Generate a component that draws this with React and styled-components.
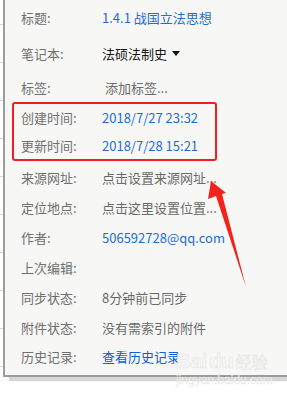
import React from 'react'
import styled, { createGlobalStyle } from 'styled-components'

const Global = createGlobalStyle`
  html, body { margin: 0; padding: 0; background: #ffffff; }
  body { font-family: "Noto Sans CJK SC", "Microsoft YaHei", sans-serif; }
`

const Page = styled.div`
  position: relative;
  width: 287px;
  height: 396px;
  overflow: hidden;
  display: flex;
  align-items: flex-start;
  background: #ffffff;
`

const Strip = styled.div`
  width: 3px;
  height: 378px;
  flex: none;
  background: repeating-linear-gradient(
    to bottom,
    #ffffff 0px,
    #ffffff 24px,
    #d4d4d4 24px,
    #d4d4d4 25px,
    #ffffff 25px,
    #ffffff 38px
  );
`

const Panel = styled.div`
  flex: 1;
  height: 375px;
  background: #f7f7f5;
  border-left: 2px solid #9c9c9c;
  border-bottom: 2px solid #9c9c9c;
  box-shadow: 6px 4px 1px rgba(0, 0, 0, 0.16);
  display: flex;
  flex-direction: column;
  font-size: 13px;
`

const Row = styled.div`
  height: ${p => p.$h}px;
  display: flex;
  align-items: center;
  padding-left: ${p => (p.$inset ? 7 : 16)}px;
  flex: none;
`

const Label = styled.span`
  width: 81px;
  flex: none;
  color: #707070;
  white-space: nowrap;
`

const Value = styled.span`
  white-space: nowrap;
  color: ${p =>
    p.$tone === 'blue' ? '#1f6cd3' :
    p.$tone === 'link' ? '#0c5fd6' :
    p.$tone === 'dark' ? '#151515' : '#6a6a6a'};
  padding-left: ${p => p.$pad || 0}px;
  display: inline-flex;
  align-items: center;
`

const Highlight = styled.div`
  margin-left: 7px;
  width: 201px;
  height: 55px;
  border: 2px solid #f01e1e;
  border-radius: 3px;
  display: flex;
  flex-direction: column;
`

const Caret = styled.svg`
  margin-left: 5px;
  width: 8px;
  height: 5px;
`

const Arrow = styled.svg`
  position: absolute;
  left: 0;
  top: 0;
  pointer-events: none;
`

const Watermark = styled.div`
  position: absolute;
  left: 176px;
  top: 351px;
  color: #f7f7f5;
  -webkit-text-stroke: 0.5px #e2e2e2;
  font-family: "Liberation Sans", Arial, sans-serif;
  line-height: 1;
  opacity: 0.85;
  pointer-events: none;
`

const Brand = styled.div`
  font-size: 20px;
  font-weight: bold;
  display: flex;
  align-items: center;
  gap: 2px;

  span:last-child {
    font-family: "Noto Sans CJK SC", sans-serif;
    font-size: 16px;
    font-weight: normal;
  }
`

const Domain = styled.div`
  font-size: 12px;
  margin-top: 3px;
  -webkit-text-stroke: 0.3px #dedede;
`

const rows = [
  { label: '来源网址:', value: '点击设置来源网址...', h: 32 },
  { label: '定位地点:', value: '点击这里设置位置...', h: 29.8 },
  { label: '作者:', value: '506592728@qq.com', tone: 'blue', h: 29.8 },
  { label: '上次编辑:', value: '', h: 29.8 },
  { label: '同步状态:', value: '8分钟前已同步', h: 29.8 },
  { label: '附件状态:', value: '没有需索引的附件', h: 29.8 },
  { label: '历史记录:', value: '查看历史记录', tone: 'link', h: 29.8 },
]

export default function App() {
  return (
    <Page>
      <Global />
      <Strip />
      <Panel>
        <Row $h={34}>
          <Label>标题:</Label>
          <Value $tone="blue">1.4.1 战国立法思想</Value>
        </Row>
        <Row $h={38}>
          <Label>笔记本:</Label>
          <Value $tone="dark">
            法硕法制史
            <Caret viewBox="0 0 8 5">
              <path d="M0 0 L8 0 L4 5 Z" fill="#111" />
            </Caret>
          </Value>
        </Row>
        <Row $h={30}>
          <Label>标签:</Label>
          <Value $pad={3}>添加标签...</Value>
        </Row>
        <Highlight>
          <Row $h={27.5} $inset>
            <Label>创建时间:</Label>
            <Value $tone="blue">2018/7/27 23:32</Value>
          </Row>
          <Row $h={27.5} $inset>
            <Label>更新时间:</Label>
            <Value $tone="blue">2018/7/28 15:21</Value>
          </Row>
        </Highlight>
        {rows.map(r => (
          <Row key={r.label} $h={r.h}>
            <Label>{r.label}</Label>
            <Value $tone={r.tone}>{r.value}</Value>
          </Row>
        ))}
      </Panel>
      <Watermark>
        <Brand>
          <span>Bai</span>
          <span>du</span>
          <span>经验</span>
        </Brand>
        <Domain>jingyan.baidu.com</Domain>
      </Watermark>
      <Arrow width="287" height="396" viewBox="0 0 287 396">
        <polygon
          points="211,181 226,193 222,194 246,287 216,196 208,199"
          fill="#f3221b"
        />
      </Arrow>
    </Page>
  )
}
